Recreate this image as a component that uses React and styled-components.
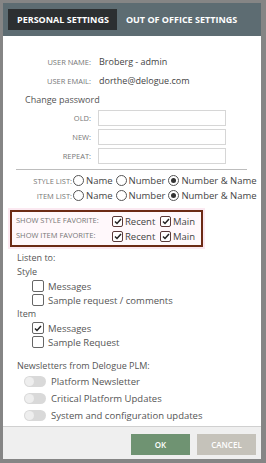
import React from "react";
import styled, { createGlobalStyle } from "styled-components";

const Global = createGlobalStyle`
	html, body {
		margin: 0;
		padding: 0;
		background: #858585;
		font-family: "Open Sans", "Liberation Sans", sans-serif;
	}
`;

const Dialog = styled.div`
	margin: 3px 5px 0 3px;
	height: 456px;
	background: #fff;
	display: flex;
	flex-direction: column;
	overflow: hidden;
`;

const Header = styled.div`
	height: 33px;
	flex: none;
	background: #5d6c72;
	display: flex;
	align-items: flex-start;
	padding: 6px 5px 0 5px;
	box-sizing: border-box;
`;

const Tab = styled.div`
	height: 21px;
	padding: 0 8px 0 9px;
	display: flex;
	align-items: center;
	color: #fff;
	font-weight: 700;
	font-size: 9px;
	white-space: nowrap;
	background: ${p => (p.$active ? "#2c2f31" : "transparent")};
`;

const Body = styled.div`
	flex: 1;
	min-height: 0;
	overflow: hidden;
	padding: 16px 0 0 0;
	color: #555;
	font-size: 9px;
`;

const InfoGrid = styled.div`
	display: grid;
	grid-template-columns: 88px 1fr;
	column-gap: 8px;
	grid-auto-rows: 19px;
	align-items: center;
`;

const SmallLabel = styled.div`
	font-size: 7.5px;
	text-transform: uppercase;
	color: #777;
	text-align: ${p => p.$align || "right"};
	white-space: nowrap;
`;

const Value = styled.div`
	font-size: 9px;
	color: #444;
`;

const Heading = styled.div`
	font-size: 9px;
	color: #555;
	padding-left: ${p => p.$indent || 14}px;
	margin-top: ${p => p.$top || 0}px;
	line-height: 14px;
`;

const PwGrid = styled.div`
	display: grid;
	grid-template-columns: 88px 128px;
	column-gap: 7px;
	row-gap: 3px;
	align-items: center;
	margin-top: 3px;
`;

const PwLabel = styled.div`
	font-size: 7.5px;
	color: #777;
	text-align: right;
`;

const PwInput = styled.div`
	height: 16px;
	border: 1px solid #d6d6d6;
	box-sizing: border-box;
`;

const Divider = styled.div`
	margin: 5px 14px 0 13px;
	border-top: 1px solid #bdbdbd;
`;

const ListGrid = styled.div`
	display: grid;
	grid-template-columns: 69px 1fr;
	grid-auto-rows: 15px;
	align-items: center;
	margin-top: 3px;
`;

const Options = styled.div`
	display: flex;
	align-items: center;
	gap: 2px;
	font-size: 9.5px;
	color: #444;
	white-space: nowrap;
`;

const Radio = styled.span`
	width: 11px;
	height: 11px;
	border: 1px solid #555;
	border-radius: 50%;
	box-sizing: border-box;
	display: inline-flex;
	align-items: center;
	justify-content: center;
	margin: 0 0 0 1px;
	flex: none;
	&::after {
		content: "";
		width: 5px;
		height: 5px;
		border-radius: 50%;
		background: ${p => (p.$on ? "#333" : "transparent")};
	}
`;

const FavBox = styled.div`
	margin: 7px 0 0 7px;
	width: 193px;
	height: 37px;
	box-sizing: border-box;
	border: 2.5px solid #6c2b15;
	background: #fff8fb;
	box-shadow: 0 0 0 2px #fbe9f1;
	display: grid;
	grid-template-columns: 96px 48px 1fr;
	align-content: center;
	row-gap: 2px;
	padding-left: 4px;
`;

const FavCell = styled.div`
	display: flex;
	align-items: center;
	gap: 2px;
	height: 13px;
	font-size: 9.5px;
	color: #444;
`;

const Check = styled.span`
	width: ${p => p.$size || 11}px;
	height: ${p => p.$size || 11}px;
	border: 1px solid ${p => p.$border || "#666"};
	border-radius: 2px;
	box-sizing: border-box;
	display: inline-flex;
	align-items: center;
	justify-content: center;
	background: #fff;
	flex: none;
`;

const CheckRow = styled.div`
	display: flex;
	align-items: center;
	gap: 4px;
	padding-left: 29px;
	height: 14px;
	font-size: 9.5px;
	color: #555;
`;

const Toggle = styled.span`
	width: 22px;
	height: 11px;
	border-radius: 6px;
	background: #d9d9d9;
	position: relative;
	flex: none;
	&::after {
		content: "";
		position: absolute;
		left: 1px;
		top: 1px;
		width: 9px;
		height: 9px;
		border-radius: 50%;
		background: #eeeeee;
	}
`;

const ToggleRow = styled.div`
	display: flex;
	align-items: center;
	gap: 5px;
	padding-left: 21px;
	height: 17px;
	font-size: 9.5px;
	color: #555;
`;

const Footer = styled.div`
	height: 33px;
	flex: none;
	box-sizing: border-box;
	border-top: 1px solid #d0d0d0;
	background: #efefef;
	display: flex;
	justify-content: flex-end;
	align-items: flex-start;
	gap: 7px;
	padding: 7px 5px 0 0;
`;

const Button = styled.div`
	width: 59px;
	height: 21px;
	display: flex;
	align-items: center;
	justify-content: center;
	color: #fff;
	font-size: 8px;
	font-weight: 600;
	background: ${p => p.$bg};
`;

const Tick = () => (
	<svg width="8" height="7" viewBox="0 0 8 7">
		<path d="M1 3.5 L3 5.5 L7 1" stroke="#222" strokeWidth="1.5" fill="none" />
	</svg>
);

const CheckBox = ({ on, size, border }) => (
	<Check $size={size} $border={border}>{on && <Tick />}</Check>
);

export default function App() {
	return (
		<>
			<Global />
			<Dialog>
				<Header>
					<Tab $active>PERSONAL SETTINGS</Tab>
					<Tab>OUT OF OFFICE SETTINGS</Tab>
				</Header>
				<Body>
					<InfoGrid>
						<SmallLabel>User name:</SmallLabel>
						<Value>Broberg - admin</Value>
						<SmallLabel>User email:</SmallLabel>
						<Value>dorthe@delogue.com</Value>
					</InfoGrid>
					<Heading $indent={22} $top={3}>Change password</Heading>
					<PwGrid>
						<PwLabel>OLD:</PwLabel>
						<PwInput />
						<PwLabel>NEW:</PwLabel>
						<PwInput />
						<PwLabel>REPEAT:</PwLabel>
						<PwInput />
					</PwGrid>
					<Divider />
					<ListGrid>
						<SmallLabel>Style list:</SmallLabel>
						<Options>
							<Radio />Name<Radio />Number<Radio $on />Number &amp; Name
						</Options>
						<SmallLabel>Item list:</SmallLabel>
						<Options>
							<Radio />Name<Radio />Number<Radio $on />Number &amp; Name
						</Options>
					</ListGrid>
					<FavBox>
						<SmallLabel $align="left">Show style favorite:</SmallLabel>
						<FavCell><CheckBox on border="#5a3a3a" />Recent</FavCell>
						<FavCell><CheckBox on border="#5a3a3a" />Main</FavCell>
						<SmallLabel $align="left">Show item favorite:</SmallLabel>
						<FavCell><CheckBox on border="#5a3a3a" />Recent</FavCell>
						<FavCell><CheckBox on border="#5a3a3a" />Main</FavCell>
					</FavBox>
					<Heading $top={4}>Listen to:</Heading>
					<Heading>Style</Heading>
					<CheckRow><CheckBox size={12} />Messages</CheckRow>
					<CheckRow><CheckBox size={12} />Sample request / comments</CheckRow>
					<Heading>Item</Heading>
					<CheckRow><CheckBox size={12} on />Messages</CheckRow>
					<CheckRow><CheckBox size={12} />Sample Request</CheckRow>
					<Heading $top={10}>Newsletters from Delogue PLM:</Heading>
					<ToggleRow><Toggle />Platform Newsletter</ToggleRow>
					<ToggleRow><Toggle />Critical Platform Updates</ToggleRow>
					<ToggleRow><Toggle />System and configuration updates</ToggleRow>
				</Body>
				<Footer>
					<Button $bg="#6f9372">OK</Button>
					<Button $bg="#c5c2ba">CANCEL</Button>
				</Footer>
			</Dialog>
		</>
	);
}
